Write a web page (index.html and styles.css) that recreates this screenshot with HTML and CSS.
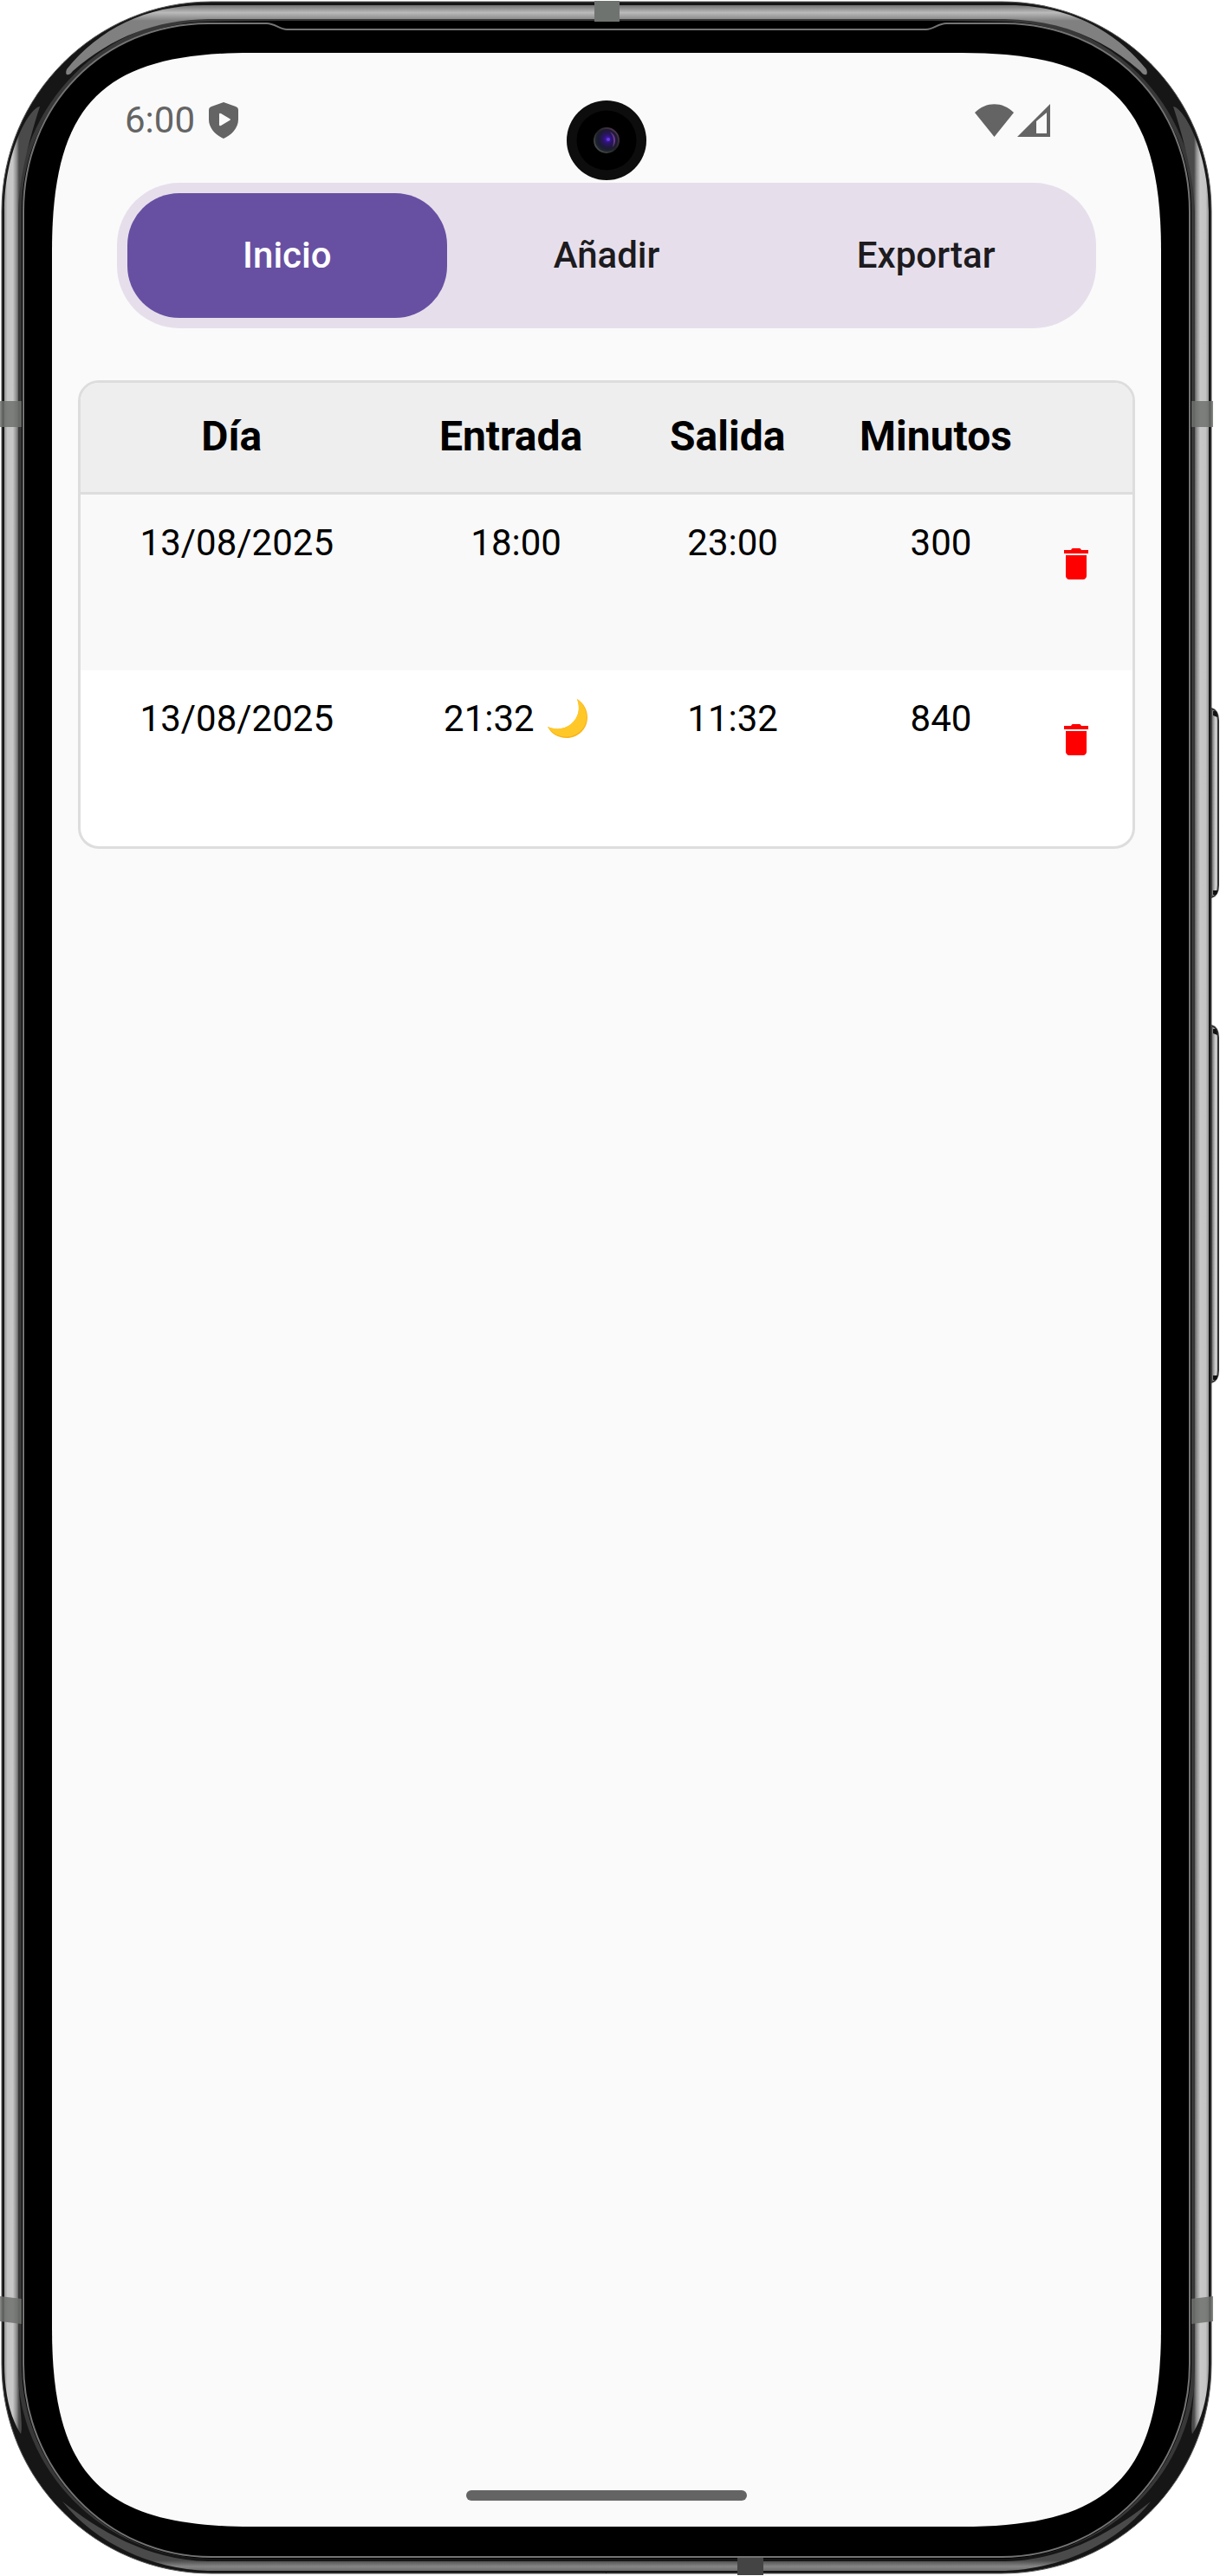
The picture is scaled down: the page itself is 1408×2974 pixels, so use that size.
FILE: index.html
```html
<!DOCTYPE html>
<html lang="es">
<head>
<meta charset="utf-8">
<meta name="viewport" content="width=device-width, initial-scale=1">
<title>Registro de horas</title>
<link rel="stylesheet" href="styles.css">
</head>
<body>
<div class="phone">
  <svg class="frame" viewBox="0 0 1408 2974" preserveAspectRatio="none" aria-hidden="true">
    <defs>
      <linearGradient id="side" x1="4" x2="22" y1="0" y2="0" gradientUnits="userSpaceOnUse">
        <stop offset="0" stop-color="#858585"/><stop offset=".25" stop-color="#c4c4c4"/>
        <stop offset=".6" stop-color="#c8c8c8"/><stop offset=".85" stop-color="#8a8a8a"/><stop offset="1" stop-color="#4a4a4a"/>
      </linearGradient>
      <linearGradient id="top" x1="0" x2="0" y1="5" y2="24" gradientUnits="userSpaceOnUse">
        <stop offset="0" stop-color="#6a6a6a"/><stop offset=".5" stop-color="#bababa"/><stop offset="1" stop-color="#808080"/>
      </linearGradient>
      <linearGradient id="bottom" x1="0" x2="0" y1="2956" y2="2970" gradientUnits="userSpaceOnUse">
        <stop offset="0" stop-color="#4a4a4a"/><stop offset=".5" stop-color="#868686"/><stop offset="1" stop-color="#606060"/>
      </linearGradient>
      <linearGradient id="key" x1="1399" x2="1407" y1="0" y2="0" gradientUnits="userSpaceOnUse">
        <stop offset="0" stop-color="#777"/><stop offset=".5" stop-color="#d4d4d4"/><stop offset="1" stop-color="#999"/>
      </linearGradient>
      <g id="half">
        <path fill="#161616" d="M701 2H244C110 2 2 110 2 244V2729C2 2863 110 2971 244 2971H701Z"/>
        <path fill="none" stroke="#555" d="M700 2H244C110 2 2 110 2 244V2729C2 2863 110 2971 244 2971H700"/>
        <path fill="none" stroke="#383838" stroke-width="6" d="M701 23H244C122 23 23 122 23 244V2729C23 2851 122 2951 244 2951H701"/>
        <path fill="url(#side)" d="M46 123C34 124 5 175 5 244V2729C5 2760 11 2790 24 2810C27 2800 21 2770 21 2729V244C22 205 34 160 46 123Z"/>
        <path fill="url(#top)" d="M701 6H236C168 6 114 34 77 80C74 88 80 88 84 82C130 42 180 23 240 22H701Z"/>
        <path fill="url(#bottom)" d="M701 2968H240C175 2966 110 2936 72 2888C112 2920 170 2956 240 2957H701Z"/>
        <path d="M701 24H330L240 25C120 28 25 122 25 244V2729C25 2850 122 2954 244 2954H701Z"/>
        <path fill="none" stroke="#747474" stroke-width="2" d="M701 34H331C323 34 317 27 308 27H240C118 28 27 122 27 244V2729C27 2850 122 2952 244 2952H701"/>
        <path fill="#fafafa" d="M701 61H290C119 61 60 119 60 290V2688C60 2859 119 2917 290 2917H701Z"/>
        <path fill="#6f716e" d="M0 463H25V493H0ZM0 2651L25 2654V2683L0 2680Z" opacity=".85"/>
      </g>
    </defs>
    <path fill="url(#key)" stroke="#333" stroke-width="2" d="M1398 818Q1406 820 1406 832V1022Q1406 1034 1398 1036ZM1398 1184Q1406 1186 1406 1198V1582Q1406 1594 1398 1596Z"/>
    <path fill="#111" d="M1400 821h3q2 2 2 7l-5-2zM1400 1028h5q0 4-2 5h-3zM1400 1188h3q2 2 2 7l-5-2zM1400 1588h5q0 4-2 5h-3z"/>
    <use href="#half"/>
    <use href="#half" transform="matrix(-1 0 0 1 1400 0)"/>
    <path fill="#6f7370" d="M686 1H715V25H686Z"/>
    <path fill="#444" d="M851 2953H881V2973H851Z"/>
  </svg>

  <div class="screen">
    <header class="status">
      <span class="time">6:00</span>
      <svg class="shield" viewBox="0 0 34 42" aria-hidden="true"><path fill="#646464" fill-rule="evenodd" d="M17 0L31 5Q34 6 34 9V20C34 30 26 38 17 42C8 38 0 30 0 20V9Q0 6 3 5ZM12 14V26Q12 28 14 27L24 21Q26 20 24 19L14 13Q12 12 12 14Z"/></svg>
      <span class="signals">
        <svg class="wifi" viewBox="0 0 45 38" aria-hidden="true"><path fill="#646464" d="M0 10C13-3 32-3 45 10L22.500 38Z"/></svg>
        <svg class="cell" viewBox="0 0 38 38" aria-hidden="true"><path fill="#646464" fill-rule="evenodd" d="M0 38L38 0V38ZM22 20V34H34V10Z"/></svg>
      </span>
    </header>
    <svg class="camera" viewBox="0 0 92 92" aria-hidden="true">
      <defs>
        <radialGradient id="lens" cx=".55" cy=".45" r=".55">
          <stop offset="0" stop-color="#4a20c0"/><stop offset=".3" stop-color="#2c1470"/><stop offset=".7" stop-color="#1c1a30"/><stop offset="1" stop-color="#1a2a30"/>
        </radialGradient>
        <linearGradient id="glow" x1="0" x2="1" y1="1" y2="0"><stop offset="0" stop-color="#555"/><stop offset=".5" stop-color="#222"/><stop offset="1" stop-color="#5a3a5c"/></linearGradient>
      </defs>
      <circle cx="46" cy="46" r="46" fill="#0d0d0d"/>
      <circle cx="46" cy="46" r="34.500"/>
      <circle cx="46" cy="46" r="14" fill="url(#lens)" stroke="url(#glow)" stroke-width="2"/>
      <path d="M50 36C57 40 58 48 53 54C55 46 54 41 50 36Z" fill="#7a4590" opacity=".8"/>
      <circle cx="48" cy="45" r="2" fill="#6a38e8"/>
    </svg>

    <nav class="tabs">
      <button class="tab active" type="button">Inicio</button>
      <button class="tab" type="button">Añadir</button>
      <button class="tab" type="button">Exportar</button>
    </nav>

    <main class="content">
      <div class="card">
        <table class="hours">
          <colgroup><col class="day"><col class="in"><col class="out"><col class="mins"><col class="act"></colgroup>
          <thead>
            <tr><th>Día</th><th>Entrada</th><th>Salida</th><th>Minutos</th><th></th></tr>
          </thead>
          <tbody>
            <tr>
              <td>13/08/2025</td><td>18:00</td><td>23:00</td><td>300</td>
              <td class="action"><button class="delete" type="button" aria-label="Eliminar"><svg viewBox="0 0 24 24" aria-hidden="true"><path d="M6 19c0 1.100.900 2 2 2h8c1.100 0 2-.900 2-2V7H6zM19 4h-4l-.500-.700Q14.300 3 14 3h-4q-.300 0-.500.300L9 4H5v2h14z"/></svg></button></td>
            </tr>
            <tr>
              <td>13/08/2025</td>
              <td>21:32 <svg class="moon" viewBox="0 0 48 48" role="img" aria-label="Turno de noche"><path fill="#f9b31c" d="M35 1C42 5 47 13 47 22C47 36 36 46 23 46C13 46 5 41 1 33C10 37 21 36 28 30C37 22 39 12 35 1Z"/><path fill="#ffc828" d="M35 1C41 5 46 13 46 22C46 34 36 44 23 44.500C13 44.500 6 40 1 33C10 37 21 36 28 30C37 22 39 12 35 1Z"/></svg></td>
              <td>11:32</td><td>840</td>
              <td class="action"><button class="delete" type="button" aria-label="Eliminar"><svg viewBox="0 0 24 24" aria-hidden="true"><path d="M6 19c0 1.100.900 2 2 2h8c1.100 0 2-.900 2-2V7H6zM19 4h-4l-.500-.700Q14.300 3 14 3h-4q-.300 0-.500.300L9 4H5v2h14z"/></svg></button></td>
            </tr>
          </tbody>
        </table>
      </div>
    </main>

    <div class="home-bar"></div>
  </div>
</div>
</body>
</html>
```
FILE: styles.css
```css
* { box-sizing: border-box; }

body {
  margin: 0;
  background: #fff;
  color: #000;
  font-family: Roboto, "Liberation Sans", sans-serif;
  font-size: 42px;
  line-height: 60px;
}

button {
  border: 0;
  padding: 0;
  background: none;
  font: inherit;
  cursor: pointer;
}

/* Device */
.phone {
  position: relative;
  display: flex;
  min-height: 100vh;
  padding: 61px 68px 57px 60px;
}

.frame {
  position: absolute;
  inset: 0;
  width: 100%;
  height: 100%;
}

.screen {
  position: relative;
  display: flex;
  flex: 1;
  flex-direction: column;
}

.camera {
  position: absolute;
  top: 55px;
  left: 50%;
  width: 92px;
  margin-left: -46px;
}

.home-bar {
  width: 324px;
  height: 12px;
  margin: 0 auto 30px;
  border-radius: 6px;
  background: #646464;
}

/* Status bar */
.status {
  display: flex;
  align-items: center;
  height: 150px;
  padding: 6px 128px 0 84px;
  color: #646464;
}

.shield {
  width: 34px;
  margin-left: 16px;
}

.signals {
  display: flex;
  gap: 4px;
  margin-left: auto;
}

.wifi { width: 45px; }
.cell { width: 38px; }

/* Tabs */
.tabs {
  display: flex;
  margin: 0 75px;
  padding: 12px;
  border-radius: 72px;
  background: #e6dfeb;
}

.tab {
  flex: 1;
  height: 144px;
  border-radius: 60px;
  color: #1d1b20;
  font-weight: 500;
}

.tab.active {
  background: #6750a2;
  color: #fff;
}

/* Hours table */
.content {
  flex: 1;
  padding: 60px 30px;
}

.card {
  overflow: hidden;
  border: 3px solid #ddd;
  border-radius: 24px;
  background: #fff;
}

.hours {
  width: 100%;
  border-collapse: separate;
  border-spacing: 0;
  table-layout: fixed;
}

.day { width: 29.7%; }
.in { width: 23.4%; }
.out { width: 17.8%; }
.mins { width: 21.8%; }
.act { width: 7.3%; }

th {
  height: 129px;
  padding: 24px 12px 0 0;
  border-bottom: 3px solid #ddd;
  background: #eee;
  font-size: 48px;
  font-weight: 700;
  line-height: 76px;
  vertical-align: top;
}

td {
  height: 203px;
  padding: 26px 0 0;
  text-align: center;
  vertical-align: top;
}

tbody tr:nth-child(odd) { background: #f9f9f9; }

.moon {
  width: 48px;
  height: 48px;
  margin-left: 4px;
  vertical-align: -10px;
}

.action {
  padding-top: 56px;
  text-align: left;
}

.delete {
  display: block;
  width: 48px;
  height: 48px;
  fill: #f00;
}

.delete svg { display: block; }
```
